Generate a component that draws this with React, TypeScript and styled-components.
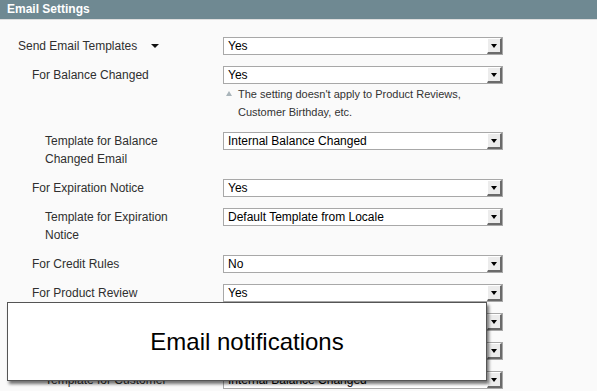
import React from 'react'
import styled, { createGlobalStyle } from 'styled-components'

const colors = {
	header: '#6f8992',
	background: '#fafafa',
	label: '#2f2f2f',
	selectBorder: '#a8a8a8',
}

type TRow = {
	label: string
	level: 0 | 1 | 2
	value: string
	note?: string[]
	toggle?: boolean
}

const rows: TRow[] = [
	{ label: 'Send Email Templates', level: 0, value: 'Yes', toggle: true },
	{
		label: 'For Balance Changed',
		level: 1,
		value: 'Yes',
		note: ["The setting doesn't apply to Product Reviews,", 'Customer Birthday, etc.'],
	},
	{ label: 'Template for Balance Changed Email', level: 2, value: 'Internal Balance Changed' },
	{ label: 'For Expiration Notice', level: 1, value: 'Yes' },
	{ label: 'Template for Expiration Notice', level: 2, value: 'Default Template from Locale' },
	{ label: 'For Credit Rules', level: 1, value: 'No' },
	{ label: 'For Product Review', level: 1, value: 'Yes' },
	{ label: 'For Newsletter', level: 1, value: 'Yes' },
	{ label: 'For Customer Birthday', level: 1, value: 'Yes' },
	{ label: 'Template for Customer Birthday Email', level: 2, value: 'Internal Balance Changed' },
]

const indent = [18, 32, 45]

function App() {
	return (
		<>
			<GlobalStyle />
			<Page>
				<Header>Email Settings</Header>
				<FormList>
					{rows.map((row) => (
						<Row key={row.label}>
							<Label $indent={indent[row.level]}>
								{row.label}
								{row.toggle && <Toggle />}
							</Label>
							<Value>
								<Select>
									<SelectText>{row.value}</SelectText>
									<SelectButton>
										<Arrow />
									</SelectButton>
								</Select>
								{row.note && (
									<Note>
										{row.note.map((line, i) => (
											<NoteLine key={line}>
												{i === 0 ? <NoteMark /> : <NoteSpacer />}
												{line}
											</NoteLine>
										))}
									</Note>
								)}
							</Value>
						</Row>
					))}
				</FormList>
				<Callout>Email notifications</Callout>
			</Page>
		</>
	)
}

export default App

const GlobalStyle = createGlobalStyle`
	html, body {
		margin: 0;
		padding: 0;
		background: ${colors.background};
	}
	body {
		font-family: "Liberation Sans", Arial, Helvetica, sans-serif;
	}
`

const Page = styled.div`
	position: relative;
	width: 597px;
	height: 391px;
	overflow: hidden;
	background: ${colors.background};
`
const Header = styled.div`
	height: 19px;
	line-height: 18px;
	padding-left: 7px;
	background: ${colors.header};
	border-bottom: 1px solid #dedede;
	color: #fff;
	font-size: 12px;
	font-weight: bold;
`
const FormList = styled.div`
	display: flex;
	flex-direction: column;
	padding-top: 17px;
`
const Row = styled.div`
	display: flex;
	padding-bottom: 11px;
`
const Label = styled.div<{ $indent: number }>`
	box-sizing: border-box;
	width: 223px;
	flex-shrink: 0;
	padding-left: ${(p) => p.$indent}px;
	padding-right: 30px;
	font-size: 12px;
	line-height: 18px;
	color: ${colors.label};
`
const Toggle = styled.span`
	display: inline-block;
	margin-left: 14px;
	vertical-align: 2px;
	border-left: 4px solid transparent;
	border-right: 4px solid transparent;
	border-top: 4px solid #111;
`
const Value = styled.div`
	width: 280px;
	display: flex;
	flex-direction: column;
`
const Select = styled.div`
	box-sizing: border-box;
	display: flex;
	height: 18px;
	background: #fff;
	border: 1px solid ${colors.selectBorder};
	color: #000;
	font-size: 12px;
`
const SelectText = styled.div`
	flex: 1;
	padding-left: 4px;
	line-height: 16px;
	white-space: nowrap;
	overflow: hidden;
`
const SelectButton = styled.div`
	box-sizing: border-box;
	width: 15px;
	display: flex;
	align-items: center;
	justify-content: center;
	background: #ececec;
	border-top: 1px solid #fff;
	border-left: 1px solid #fff;
	border-right: 2px solid #6a6a6a;
	border-bottom: 2px solid #6a6a6a;
`
const Arrow = styled.span`
	border-left: 3px solid transparent;
	border-right: 3px solid transparent;
	border-top: 4px solid #000;
`
const Note = styled.div`
	padding-top: 1px;
	font-size: 11px;
	line-height: 18px;
	color: #333;
`
const NoteLine = styled.div`
	display: flex;
	align-items: center;
`
const NoteMark = styled.span`
	margin: 0 6px 1px 3px;
	border-left: 3px solid transparent;
	border-right: 3px solid transparent;
	border-bottom: 5px solid #a9b4ba;
`
const NoteSpacer = styled.span`
	width: 15px;
`
const Callout = styled.div`
	position: absolute;
	left: 7px;
	top: 302px;
	box-sizing: border-box;
	width: 480px;
	height: 79px;
	display: flex;
	align-items: center;
	justify-content: center;
	background: #fff;
	border: 1px solid #555;
	box-shadow: 2px 3px 3px rgba(0, 0, 0, 0.55);
	color: #000;
	font-size: 24px;
`
